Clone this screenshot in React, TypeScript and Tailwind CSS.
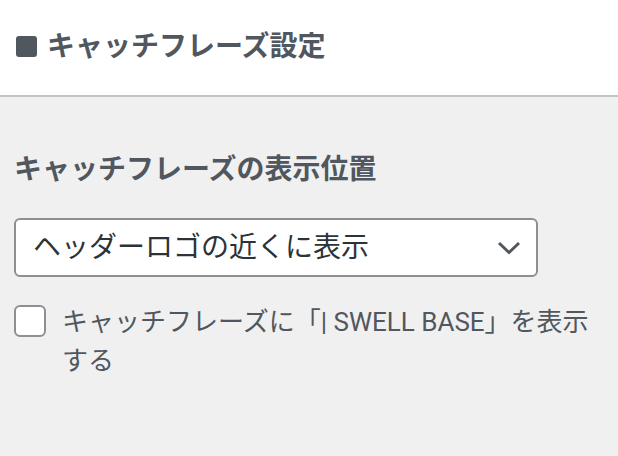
import React from "react";

export default function App() {
  const font = { fontFamily: 'Roboto, "Noto Sans CJK JP", sans-serif' };
  return (
    <div className="w-[618px] h-[456px] bg-[#f0f0f1] overflow-hidden" style={font}>
      <div className="h-[97px] bg-white border-b-2 border-[#c3c4c7] flex items-center pl-4 pb-[2px]">
        <div className="w-[21px] h-[21px] rounded-[3px] bg-[#50575e]" />
        <h2 className="ml-[10px] text-[28px] leading-[42px] font-bold text-[#50575e]">キャッチフレーズ設定</h2>
      </div>
      <div className="pt-[52px] px-[14px]">
        <h3 className="text-[28px] leading-[42px] font-bold text-[#50575e]">キャッチフレーズの表示位置</h3>
        <div className="mt-[27px] w-[524px] h-[59px] border-2 border-[#8c8f94] rounded-[6px] bg-white flex items-center justify-between pl-[17px] pr-[15px]">
          <span className="text-[28px] leading-[40px] text-[#2c3338]">ヘッダーロゴの近くに表示</span>
          <svg width="24" height="14" viewBox="0 0 24 14" fill="none">
            <path d="M2 2 L12 11.5 L22 2" stroke="#50575e" strokeWidth="3" />
          </svg>
        </div>
        <div className="mt-[26px] flex items-start">
          <div className="mt-[2px] w-[32px] h-[32px] shrink-0 border-2 border-[#8c8f94] rounded-[6px] bg-white" />
          <p className="ml-[16px] text-[26px] leading-[39px] text-[#50575e]">
            キャッチフレーズに「| SWELL BASE」を表示する
          </p>
        </div>
      </div>
    </div>
  );
}
